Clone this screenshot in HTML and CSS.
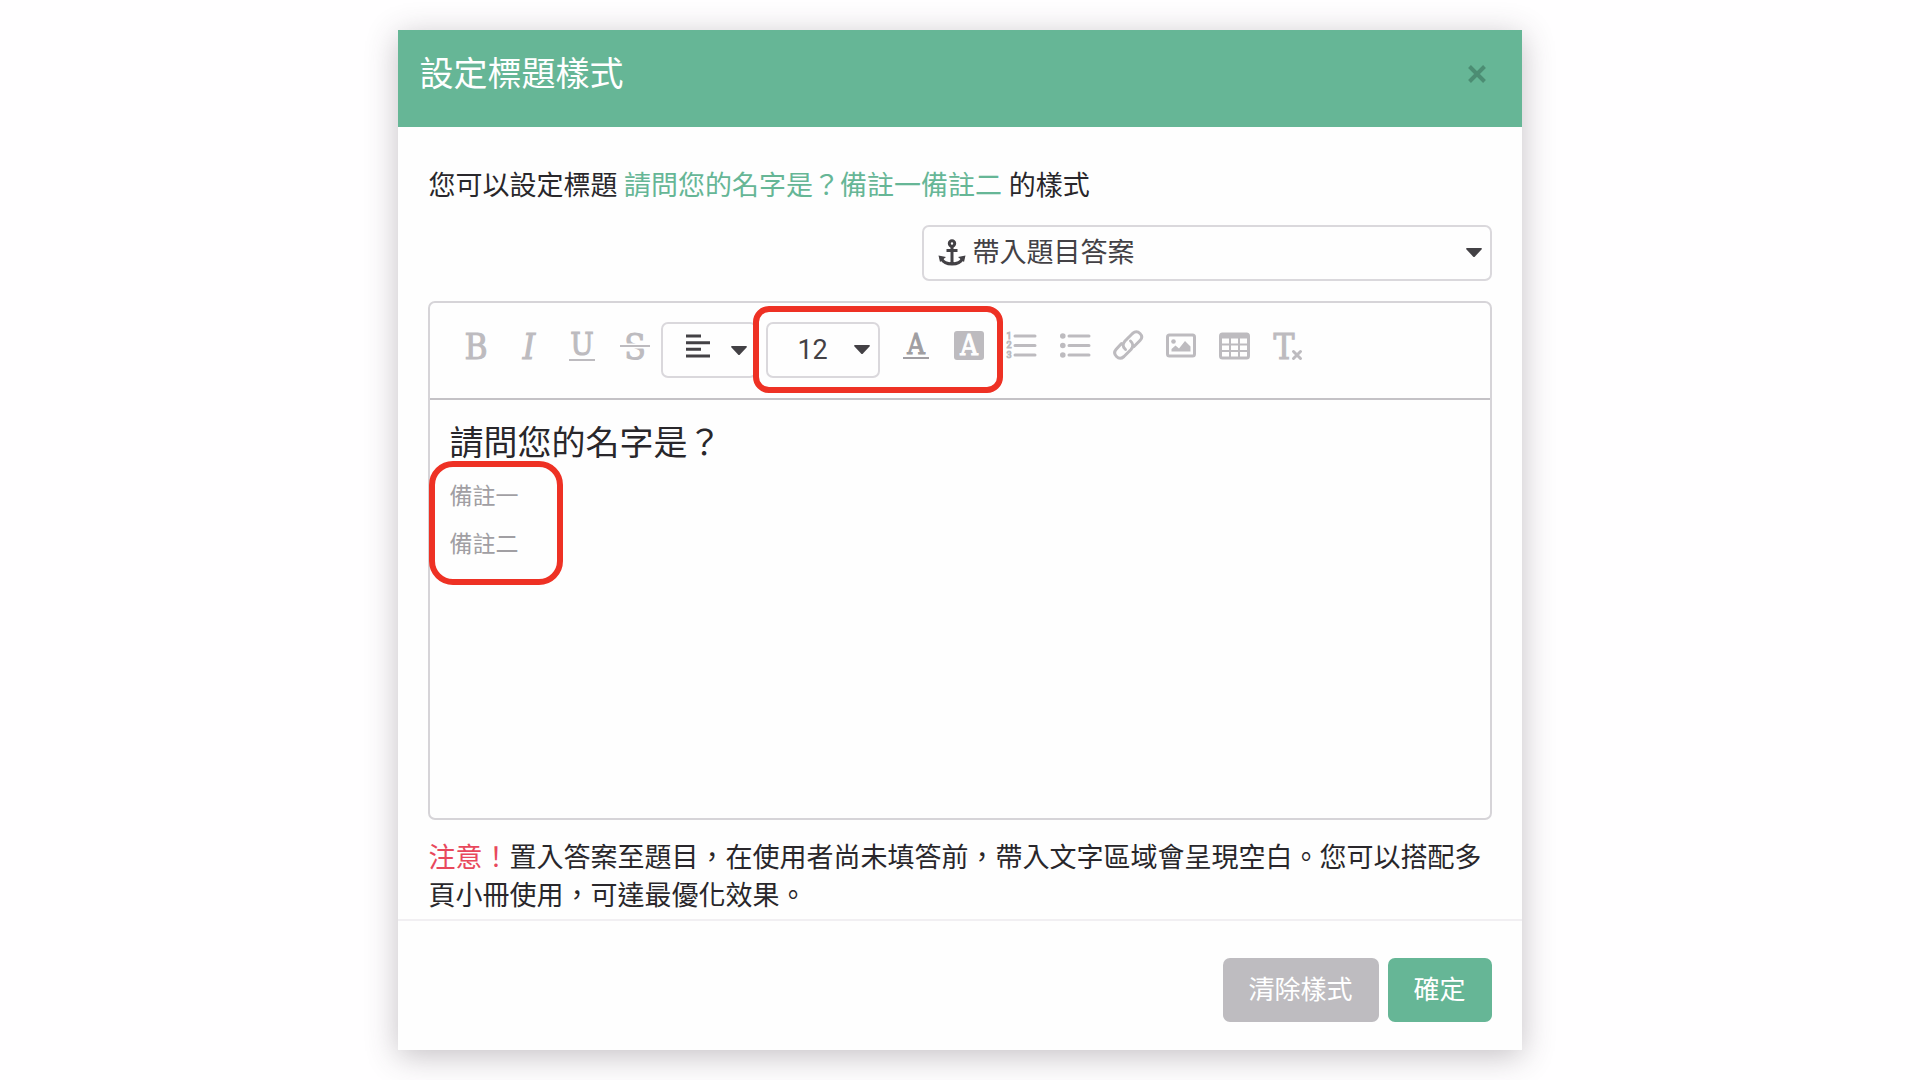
FILE: index.html
```html
<!DOCTYPE html>
<html lang="zh-Hant">
<head>
    <meta charset="UTF-8">
    <meta name="viewport" content="width=device-width, initial-scale=1.0">
    <title>設定標題樣式</title>
    <link rel="stylesheet" href="styles.css">
</head>
<body>
    <div class="modal" role="dialog" aria-labelledby="modalTitle">
        <div class="modal-header">
            <h1 id="modalTitle">設定標題樣式</h1>
            <button class="close-btn" type="button" aria-label="關閉">
                <svg width="18" height="18" viewBox="0 0 18 18"><path d="M1.500 1.500L16.500 16.500M16.500 1.500L1.500 16.500"/></svg>
            </button>
        </div>

        <div class="modal-body">
            <p class="intro">您可以設定標題 <span class="subject">請問您的名字是？備註一備註二</span> 的樣式</p>

            <!-- Answer picker -->
            <div class="select-wrap answer-select">
                <svg class="anchor" width="28" height="28" viewBox="0 0 28 28" aria-hidden="true">
                    <circle cx="14" cy="4.5" r="2.7"/>
                    <path d="M14 7V24M8.5 11.5H19.5M3 19Q6 25 14 25Q22 25 25 19"/>
                    <path class="solid" d="M0.5 16.5L8 18L2 23ZM27.500 16.5L20 18L26 23Z"/>
                </svg>
                <select aria-label="帶入題目答案">
                    <option>帶入題目答案</option>
                </select>
                <svg class="caret" width="16" height="9" viewBox="0 0 16 9" aria-hidden="true"><path d="M1 0H15Q16.500 0 15.500 1.500L9 8.500Q8 9.500 7 8.500L0.500 1.500Q-0.500 0 1 0Z"/></svg>
            </div>

            <div class="editor">
                <div class="toolbar">
                    <button class="tool" type="button" aria-label="粗體">
                        <svg viewBox="0 0 30 30"><text x="15" y="28">B</text></svg>
                    </button>
                    <button class="tool" type="button" aria-label="斜體">
                        <svg viewBox="0 0 30 30"><text class="italic" x="15" y="28">I</text></svg>
                    </button>
                    <button class="tool" type="button" aria-label="底線">
                        <svg viewBox="0 0 30 30"><text class="small" x="15" y="24">U</text><path d="M2 29H28"/></svg>
                    </button>
                    <button class="tool" type="button" aria-label="刪除線">
                        <svg viewBox="0 0 30 30"><text x="15" y="28">S</text><path class="gap" d="M4 15H26"/><path d="M0 15H30"/></svg>
                    </button>
                    <button class="align-btn" type="button" aria-label="對齊" aria-haspopup="true">
                        <svg class="lines" width="24" height="24" viewBox="0 0 24 24"><path d="M0 2H15M0 8.700H24M0 15.300H15M0 22H24"/></svg>
                        <svg class="caret" width="16" height="9" viewBox="0 0 16 9"><path d="M1 0H15Q16.500 0 15.500 1.500L9 8.500Q8 9.500 7 8.500L0.500 1.500Q-0.500 0 1 0Z"/></svg>
                    </button>
                    <div class="text-tools marked">
                        <div class="select-wrap size-select">
                            <select aria-label="文字大小">
                                <option>12</option>
                            </select>
                            <svg class="caret" width="16" height="9" viewBox="0 0 16 9" aria-hidden="true"><path d="M1 0H15Q16.500 0 15.500 1.500L9 8.500Q8 9.500 7 8.500L0.500 1.500Q-0.500 0 1 0Z"/></svg>
                        </div>
                        <button class="tool dark" type="button" aria-label="文字顏色">
                            <svg viewBox="0 0 30 30"><text class="letter-a" x="15" y="23">A</text><path d="M2 27H28"/></svg>
                        </button>
                        <button class="tool" type="button" aria-label="背景顏色">
                            <svg viewBox="0 0 30 30"><rect class="fill" x="0" y="0" width="30" height="29" rx="3"/><text class="letter-a inverse" x="15" y="24">A</text></svg>
                        </button>
                    </div>
                    <button class="tool" type="button" aria-label="編號清單">
                        <svg viewBox="0 0 30 30"><text class="num" x="2" y="8">1</text><text class="num" x="2" y="17">2</text><text class="num" x="2" y="27">3</text><path class="thick" d="M8 5H28M8 14.500H28M8 24H28"/></svg>
                    </button>
                    <button class="tool" type="button" aria-label="項目清單">
                        <svg viewBox="0 0 30 30"><circle class="fill" cx="2.800" cy="5" r="2.800"/><circle class="fill" cx="2.800" cy="14.500" r="2.800"/><circle class="fill" cx="2.800" cy="24" r="2.800"/><path class="thick" d="M9 5H29M9 14.500H29M9 24H29"/></svg>
                    </button>
                    <button class="tool" type="button" aria-label="連結">
                        <svg viewBox="0 0 30 30"><path class="thick" d="M12.500 18.500Q8 14.500 12 10L19.500 2.500Q23.500 -1 27 2.500Q30.500 6 27 9.500L21 15.500M17.500 10Q22 14 18 18.500L11 25.500Q7 29 3.500 25.500Q0 22 3 18.500L8.500 12.500"/></svg>
                    </button>
                    <button class="tool" type="button" aria-label="圖片">
                        <svg viewBox="0 0 30 30"><rect class="frame" x="1.500" y="4" width="27" height="21" rx="2"/><circle class="fill" cx="7.500" cy="10.500" r="2.300"/><path class="fill" d="M5.500 20.500V18L9.500 14.500L13 17.500L19 10L24.500 15.500V20.500Z"/></svg>
                    </button>
                    <button class="tool" type="button" aria-label="表格">
                        <svg viewBox="0 0 30 30"><rect class="frame" x="1.500" y="3" width="28" height="24" rx="2"/><path class="fill" d="M1.500 2.500H29.500V7.500H1.500Z"/><path d="M11 7V27M20 7V27M1.500 13.500H29.500M1.500 20H29.500"/></svg>
                    </button>
                    <button class="tool" type="button" aria-label="清除格式">
                        <svg viewBox="0 0 30 30"><text x="12" y="28">T</text><path class="thick" d="M21.500 20.500L28.500 27.500M28.500 20.500L21.500 27.500"/></svg>
                    </button>
                </div>

                <div class="content" contenteditable="true" role="textbox" aria-label="標題內容">
                    <p class="question">請問您的名字是？</p>
                    <div class="notes marked">
                        <p>備註一</p>
                        <p>備註二</p>
                    </div>
                </div>
            </div>

            <p class="notice"><span class="warning">注意！</span>置入答案至題目，在使用者尚未填答前，帶入文字區域會呈現空白。您可以搭配多頁小冊使用，可達最優化效果。</p>
        </div>

        <div class="modal-footer">
            <button class="clear-btn" type="button">清除樣式</button>
            <button class="ok-btn" type="button">確定</button>
        </div>
    </div>
</body>
</html>
```
FILE: styles.css
```css
* {
    box-sizing: border-box;
}

body {
    margin: 0;
    padding: 30px 0;
    font-family: Roboto, "Noto Sans CJK TC", sans-serif;
    font-size: 27px;
    line-height: 38px;
    color: #29272b;
    background-color: #fffeff;
}

h1, p {
    margin: 0;
    font-weight: normal;
}

button, select {
    font: inherit;
    color: inherit;
    margin: 0;
    padding: 0;
    border: 0;
    background: none;
    cursor: pointer;
}

svg {
    display: block;
    fill: none;
}

.modal {
    width: 58.5%;
    margin: 0 auto;
    background-color: #fefefe;
    box-shadow: 0 6px 30px rgba(60, 50, 60, 0.3);
}

/* Header */
.modal-header {
    display: flex;
    justify-content: space-between;
    align-items: center;
    padding: 19px 36px 28px 21px;
    background-color: #66b696;
    color: #fff;
}

.modal-header h1 {
    font-size: 34px;
    line-height: 50px;
}

.close-btn svg {
    stroke: #4c8d73;
    stroke-width: 4;
}

/* Body */
.modal-body {
    display: flex;
    flex-direction: column;
    gap: 20px;
    padding: 40px 30px 4px;
}

.subject {
    color: #66b696;
}

.select-wrap {
    position: relative;
    height: 56px;
    color: #434145;
}

.select-wrap select {
    width: 100%;
    height: 100%;
    border: 2px solid #dad8dc;
    border-radius: 7px;
    appearance: none;
}

.caret {
    fill: #434145;
}

.select-wrap .caret {
    position: absolute;
    right: 10px;
    top: 23px;
    pointer-events: none;
}

.answer-select {
    width: 570px;
    max-width: 100%;
    align-self: flex-end;
}

.answer-select select {
    padding-left: 49px;
}

.anchor {
    position: absolute;
    left: 16px;
    top: 14px;
    stroke: #434145;
    stroke-width: 3;
    pointer-events: none;
}

.anchor .solid {
    fill: #434145;
    stroke: none;
}

/* Editor */
.editor {
    border: 2px solid #d6d4d8;
    border-radius: 7px;
}

.toolbar {
    display: flex;
    align-items: flex-start;
    padding: 19px 19px 20px;
    border-bottom: 2px solid #c4c2c6;
}

.tool {
    display: flex;
    justify-content: center;
    align-items: center;
    width: 53px;
    height: 48px;
    color: #bdbbbf;
}

.tool.dark {
    color: #a09ea2;
}

.tool svg {
    width: 30px;
    height: 30px;
    overflow: visible;
    stroke: currentColor;
    stroke-width: 2;
}

.tool text {
    font-family: "DejaVu Serif Condensed", "DejaVu Serif", serif;
    font-size: 35px;
    text-anchor: middle;
    fill: currentColor;
    stroke-width: 1;
}

.tool .italic {
    font-style: italic;
}

.tool .small {
    font-size: 31px;
}

.tool .letter-a {
    font-size: 27px;
}

.tool .inverse {
    fill: #fff;
    stroke: #fff;
}

.tool .num {
    font-family: Roboto, sans-serif;
    font-size: 9px;
}

.tool .thick {
    stroke-width: 3;
    stroke-linecap: round;
}

.tool .frame {
    stroke-width: 3;
}

.tool .gap {
    stroke: #fefefe;
    stroke-width: 5;
}

.tool .fill {
    fill: currentColor;
    stroke: none;
}

.align-btn {
    display: flex;
    align-items: center;
    gap: 21px;
    width: 96px;
    height: 56px;
    padding-left: 23px;
    border: 2px solid #dad8dc;
    border-radius: 7px;
    margin-right: 9px;
}

.align-btn .lines {
    margin-bottom: 8px;
    stroke: #434145;
    stroke-width: 3;
}

.text-tools {
    display: flex;
}

.size-select {
    width: 114px;
    margin-right: 9px;
}

.size-select select {
    padding-left: 29px;
}

/* Red frame round the parts to look at */
.marked {
    position: relative;
}

.marked::after {
    content: "";
    position: absolute;
    border: 6px solid #ee3124;
    pointer-events: none;
}

.text-tools::after {
    inset: -16px -8px -15px -13px;
    border-radius: 16px;
}

.content {
    min-height: 418px;
    padding: 19px;
}

.question {
    font-size: 34px;
    line-height: 48px;
    margin-bottom: 6px;
}

.notes {
    width: fit-content;
    font-size: 23px;
    line-height: 48px;
    color: #a19fa3;
}

.notes::after {
    inset: -12px -45px -16px -20px;
    border-radius: 24px;
}

.notice {
    margin-top: -1px;
}

.warning {
    color: #e8485c;
}

/* Footer */
.modal-footer {
    display: flex;
    justify-content: flex-end;
    gap: 9px;
    padding: 37px 30px 28px;
    border-top: 2px solid #f1eff2;
}

.modal-footer button {
    height: 64px;
    padding: 0 26px;
    border-radius: 7px;
    font-size: 26px;
    color: #fff;
}

.modal-footer .clear-btn {
    background-color: #bebcc0;
}

.modal-footer .ok-btn {
    background-color: #66b696;
}
```
